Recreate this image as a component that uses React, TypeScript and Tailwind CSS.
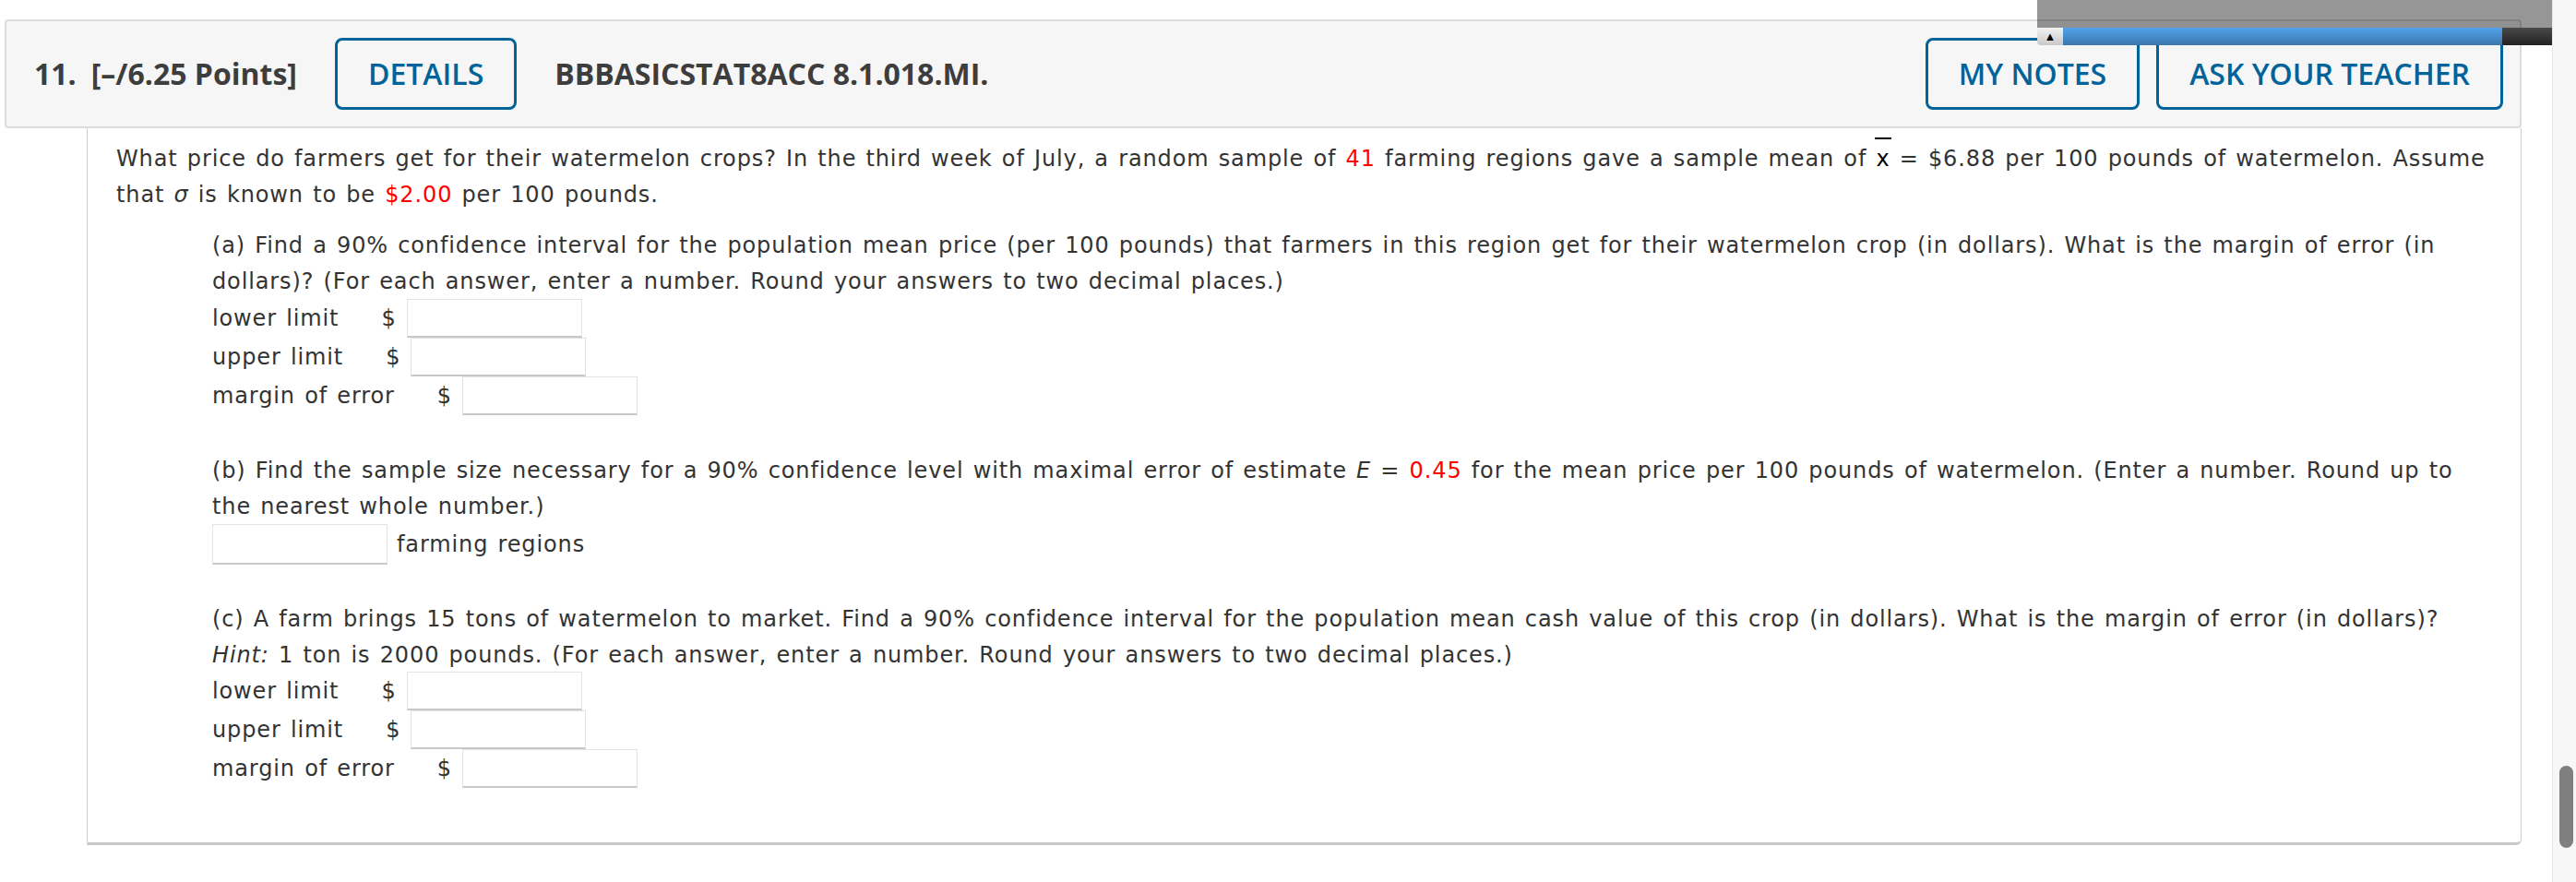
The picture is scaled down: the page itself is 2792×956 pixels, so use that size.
import React from 'react';

const Field: React.FC<{ className?: string; tall?: boolean }> = ({ className = '', tall }) => (
  <input
    type="text"
    readOnly
    className={`${tall ? 'h-[44px]' : 'h-[42px]'} w-[190px] border border-[#e3e3e3] border-b-2 border-b-[#c8c8c8] bg-white outline-none ${className}`}
  />
);

const Row: React.FC<{ label: string }> = ({ label }) => (
  <div className="flex h-[42px] items-center">
    <span>{label}</span>
    <span className="ml-[46px]">$</span>
    <Field className="ml-[11px]" />
  </div>
);

const Red: React.FC<{ children: React.ReactNode }> = ({ children }) => (
  <span className="text-[#ff0000]">{children}</span>
);

const OutlineButton: React.FC<{ label: string; className?: string }> = ({ label, className = '' }) => (
  <button
    className={`flex h-[78px] items-center rounded-[8px] border-[3px] border-[#00639a] px-[33px] text-[32px] font-semibold text-[#00639a] ${className}`}
  >
    {label}
  </button>
);

const App: React.FC = () => {
  return (
    <div className="relative flex h-[956px] w-[2792px] overflow-hidden bg-white">
      {/* question */}
      <div className="w-[2766px] pt-[21px]">
        <div className="ml-[5px] mr-[33px]">
          {/* header */}
          <div className="flex h-[118px] items-center rounded-[4px] border-2 border-[#dcdcdc] bg-[#f6f6f6] pl-[30px] pr-[18px] font-['Open_Sans',sans-serif] text-[#3d3d3d]">
            <span className="text-[32px] font-bold">11.</span>
            <span className="ml-[16px] text-[32px] font-bold">[–/6.25 Points]</span>
            <OutlineButton label="DETAILS" className="ml-[41px]" />
            <span className="ml-[41px] text-[32px] font-bold">BBBASICSTAT8ACC 8.1.018.MI.</span>
            <div className="flex-1" />
            <OutlineButton label="MY NOTES" />
            <OutlineButton label="ASK YOUR TEACHER" className="ml-[18px]" />
          </div>

          {/* body */}
          <div className="ml-[89px] rounded-br-[6px] border-x border-b-[3px] border-x-[#cfcfcf] border-b-[#c8c8c8] bg-white pb-[59px] pl-[31px] pr-[32px] pt-[14px] font-['DejaVu_Sans',Verdana,sans-serif] text-[24px] leading-[39px] tracking-[0.88px] text-[#333333] [word-spacing:1.7px]">
            <p>
              What price do farmers get for their watermelon crops? In the third week of July, a random sample of{' '}
              <Red>41</Red> farming regions gave a sample mean of{' '}
              <span className="relative inline-block text-black">
                x
                <span className="absolute -left-[1px] -right-[1px] -top-[4px] h-[2px] bg-black" />
              </span>{' '}
              = $6.88 per 100 pounds of watermelon. Assume that <i>σ</i> is known to be <Red>$2.00</Red> per 100 pounds.
            </p>

            <div className="ml-[104px] mt-[16px]">
              <p>
                (a) Find a 90% confidence interval for the population mean price (per 100 pounds) that farmers in this region get for
                their watermelon crop (in dollars). What is the margin of error (in dollars)? (For each answer, enter a number. Round
                your answers to two decimal places.)
              </p>
              <div className="-mt-px">
                <Row label="lower limit" />
                <Row label="upper limit" />
                <Row label="margin of error" />
              </div>
            </div>

            <div className="ml-[104px] mt-[41px]">
              <p>
                (b) Find the sample size necessary for a 90% confidence level with maximal error of estimate <i>E</i> ={' '}
                <Red>0.45</Red> for the mean price per 100 pounds of watermelon. (Enter a number. Round up to the nearest whole
                number.)
              </p>
              <div className="-mt-px flex h-[44px] items-center">
                <Field tall />
                <span className="ml-[10px]">farming regions</span>
              </div>
            </div>

            <div className="ml-[104px] mt-[40px]">
              <p>
                (c) A farm brings 15 tons of watermelon to market. Find a 90% confidence interval for the population mean cash value
                of this crop (in dollars). What is the margin of error (in dollars)? <i>Hint:</i> 1 ton is 2000 pounds. (For each
                answer, enter a number. Round your answers to two decimal places.)
              </p>
              <div className="-mt-[2px]">
                <Row label="lower limit" />
                <Row label="upper limit" />
                <Row label="margin of error" />
              </div>
            </div>
          </div>
        </div>
      </div>

      {/* page scrollbar */}
      <div className="h-[956px] w-[26px] border-l border-[#e6e6e6] bg-[#f7f7f7] pl-[7px] pt-[830px]">
        <div className="h-[89px] w-[15px] rounded-full bg-[#7f7f7f]" />
      </div>

      {/* floating toolbar overlay */}
      <div className="absolute left-[2208px] top-0 w-[558px]">
        <div className="h-[30px] bg-black/[0.41]" />
        <div className="flex h-[19px]">
          <div className="flex w-[28px] items-center justify-center rounded-bl-[4px] bg-gradient-to-b from-[#f2f2f2] to-[#c9c9c9] text-[13px] leading-none text-black">
            ▲
          </div>
          <div className="flex-1 bg-gradient-to-b from-[#52a3ee] to-[#3c76ab]" />
          <div className="w-[54px] bg-gradient-to-b from-[#4a4a4a] to-[#222222]" />
        </div>
      </div>
    </div>
  );
};

export default App;
